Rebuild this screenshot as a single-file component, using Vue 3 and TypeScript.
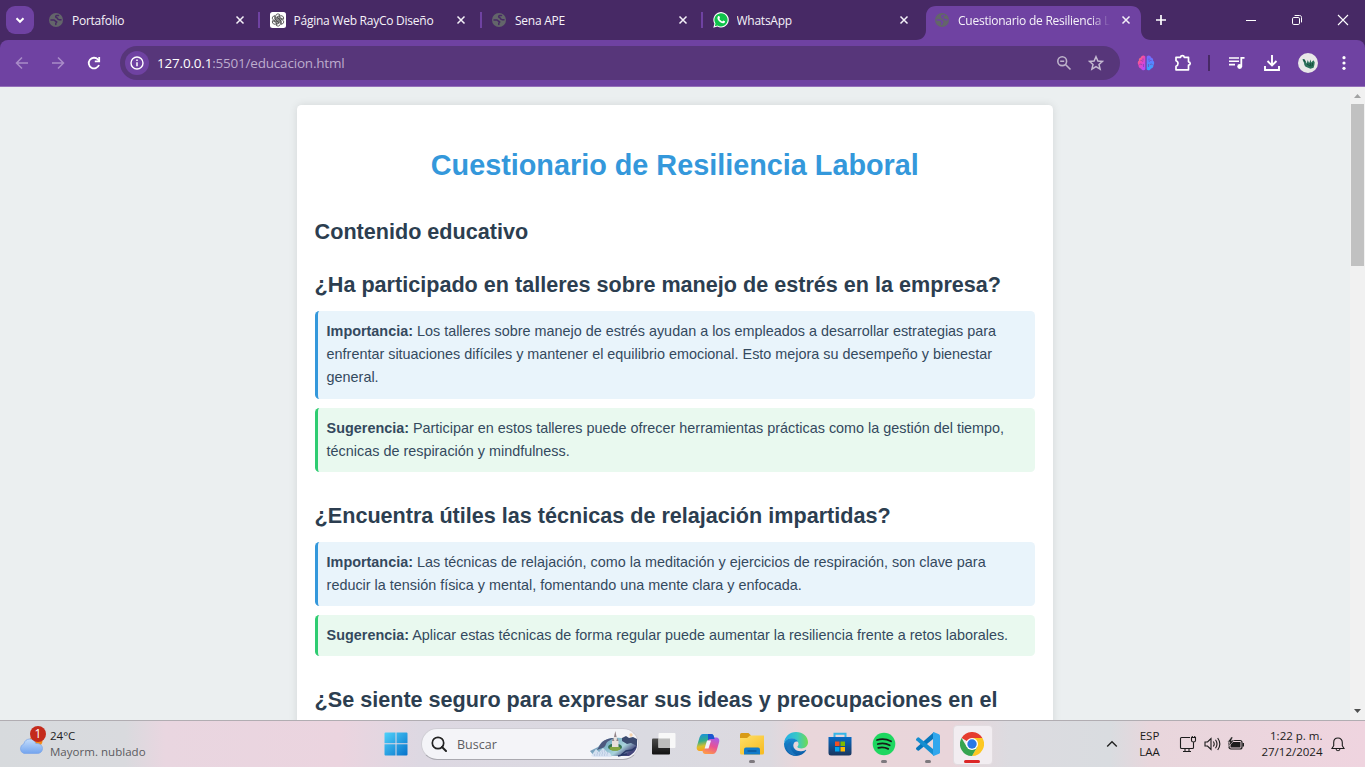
<script setup lang="ts">
interface Tab {
  title: string
  icon: 'globe' | 'gpt' | 'whatsapp'
  active?: boolean
}
interface Note {
  kind: 'importance' | 'suggestion'
  label: string
  text: string
}
interface Topic {
  question: string
  notes: Note[]
}

const tabs: Tab[] = [
  { title: 'Portafolio', icon: 'globe' },
  { title: 'Página Web RayCo Diseño', icon: 'gpt' },
  { title: 'Sena APE', icon: 'globe' },
  { title: 'WhatsApp', icon: 'whatsapp' },
  { title: 'Cuestionario de Resiliencia Laboral', icon: 'globe', active: true },
]

const topics: Topic[] = [
  {
    question: '¿Ha participado en talleres sobre manejo de estrés en la empresa?',
    notes: [
      {
        kind: 'importance',
        label: 'Importancia:',
        text: 'Los talleres sobre manejo de estrés ayudan a los empleados a desarrollar estrategias para enfrentar situaciones difíciles y mantener el equilibrio emocional. Esto mejora su desempeño y bienestar general.',
      },
      {
        kind: 'suggestion',
        label: 'Sugerencia:',
        text: 'Participar en estos talleres puede ofrecer herramientas prácticas como la gestión del tiempo, técnicas de respiración y mindfulness.',
      },
    ],
  },
  {
    question: '¿Encuentra útiles las técnicas de relajación impartidas?',
    notes: [
      {
        kind: 'importance',
        label: 'Importancia:',
        text: 'Las técnicas de relajación, como la meditación y ejercicios de respiración, son clave para reducir la tensión física y mental, fomentando una mente clara y enfocada.',
      },
      {
        kind: 'suggestion',
        label: 'Sugerencia:',
        text: 'Aplicar estas técnicas de forma regular puede aumentar la resiliencia frente a retos laborales.',
      },
    ],
  },
  { question: '¿Se siente seguro para expresar sus ideas y preocupaciones en el', notes: [] },
]

const petals = [0, 60, 120, 180, 240, 300]
</script>

<template>
  <div class="screen">
    <header class="titlebar">
      <button class="tab-search">
        <svg width="28" height="28" viewBox="0 0 28 28"><path d="M10.500 12.300l3.500 3.500 3.500-3.500" fill="none" stroke="#fff" stroke-width="2" /></svg>
      </button>
      <div class="tabs">
        <div v-for="(tab, i) in tabs" :key="tab.title" class="tab" :class="{ active: tab.active, last: i === 3 }">
          <svg v-if="tab.active" class="tab-shape" width="235" height="34" viewBox="0 0 235 34">
            <path d="M0 34c6 0 10-4 10-10V10C10 4 14 0 20 0h195c6 0 10 4 10 10v14c0 6 4 10 10 10z" fill="#6f42a2" />
          </svg>
          <span class="favicon">
            <svg v-if="tab.icon === 'globe'" width="14" height="14" viewBox="0 0 14 14">
              <circle cx="7" cy="7" r="7" fill="#63656a" />
              <g fill="none" :stroke="tab.active ? '#6f42a2' : '#472965'" stroke-linecap="round" stroke-linejoin="round">
                <path d="M2 7h2.800c1.300 0 1.100 1.300 2.400 1.500 1 .2.300 1.300-.4 1.600v1.400" stroke-width="1.500" />
                <path d="M9.500 2.400H7.800c-1.300.3-1.600 1.700-.4 2.100 1.300.3 1.100 1.800 2.300 2 .9.100 1.400.5 2.300.3" stroke-width="1.500" />
              </g>
            </svg>
            <svg v-else-if="tab.icon === 'gpt'" width="16" height="16" viewBox="0 0 16 16">
              <rect width="16" height="16" rx="2.500" fill="#fff" />
              <g fill="none" stroke="#333" stroke-width="0.750">
                <path v-for="a in petals" :key="a" :transform="`rotate(${a} 8 8)`" d="M5.700 8.200V4.200c0-1.400 1-2.300 2.200-2.300 1 0 1.700.4 2.200 1.200L6.900 5v3.700" />
              </g>
            </svg>
            <svg v-else width="16" height="16" viewBox="0 0 16 16">
              <path d="M.3 15.700l1.100-4A7.700 7.700 0 1 1 4.400 14.600z" fill="#fff" />
              <path d="M1.800 14.200l.7-2.700A6.600 6.600 0 1 1 4.600 13.500z" fill="#10c24b" />
              <path d="M5.300 4.100c.5-.3.9-.2 1.100.2l.6 1.400c.1.400-.6.900-.6 1.100.6 1.300 1.600 2.100 2.900 2.600.3 0 .8-1 1.100-.9l1.500.8c.4.3-.1 1.400-.7 1.800-1 .6-2.500.1-3.900-.8C5.600 9.100 4.500 7.700 4.400 6.300c0-.9.3-1.700.9-2.200z" fill="#fff" />
            </svg>
          </span>
          <span class="tab-title">{{ tab.title }}</span>
          <svg class="close" width="10" height="10" viewBox="0 0 10 10"><path d="M1.500 1.500l7 7M8.500 1.500l-7 7" stroke="#f4f1f8" stroke-width="1.500" /></svg>
        </div>
      </div>
      <svg class="plus" width="12" height="12" viewBox="0 0 12 12"><path d="M6 1v10M1 6h10" stroke="#fff" stroke-width="1.700" /></svg>
      <div class="window-controls">
        <svg width="12" height="12" viewBox="0 0 12 12"><path d="M1 6.500h10" stroke="#fff" /></svg>
        <svg width="12" height="12" viewBox="0 0 12 12" fill="none" stroke="#fff"><rect x="1.500" y="3.500" width="7" height="7" rx="1.300" /><path d="M3.600 1.500h4.900c1.300 0 2 .7 2 2v4.900" /></svg>
        <svg width="12" height="12" viewBox="0 0 12 12"><path d="M1 1l10 10M11 1L1 11" stroke="#fff" stroke-width="1.100" /></svg>
      </div>
    </header>

    <nav class="toolbar">
      <svg class="nav-icon dim" viewBox="0 0 16 16"><path d="M14 8H3M8 2.500L2.500 8 8 13.500" /></svg>
      <svg class="nav-icon dim" viewBox="0 0 16 16"><path d="M2 8h11M8 2.500L13.500 8 8 13.500" /></svg>
      <svg class="nav-icon" viewBox="0 0 16 16"><path d="M13 10a5.300 5.300 0 1 1-1.100-5.600L13 5.500" /><path d="M13.200 2v4.400H8.800" /></svg>
      <div class="address">
        <span class="info">
          <svg width="14" height="14" viewBox="0 0 14 14"><circle cx="7" cy="7" r="6" fill="none" stroke="#fff" stroke-width="1.400" /><path d="M7 6.200v4M7 3.500v1.400" stroke="#fff" stroke-width="1.500" /></svg>
        </span>
        <span class="url"><b>127.0.0.1</b>:5501/educacion.html</span>
        <svg class="address-icon" width="16" height="16" viewBox="0 0 16 16" fill="none" stroke="#bdb2ca" stroke-width="1.600"><circle cx="6.200" cy="6.200" r="4.400" /><path d="M9.500 9.500l5 5M4.200 6.200h4" /></svg>
        <svg class="address-icon star" width="16" height="16" viewBox="0 0 16 16" fill="none" stroke="#c5bad1" stroke-width="1.500"><path d="M8 1.700l1.900 4.300 4.600.4-3.500 3.100 1.100 4.600L8 11.700l-4.100 2.400L5 9.500 1.500 6.400l4.600-.4z" /></svg>
      </div>
      <div class="tools">
        <svg class="brain" width="18" height="18" viewBox="0 0 18 18">
          <defs>
            <linearGradient id="brainL" x2=".8" y2="1"><stop stop-color="#ff9a3c" /><stop offset=".45" stop-color="#ee45b5" /><stop offset="1" stop-color="#b04cff" /></linearGradient>
            <linearGradient id="brainR" y2="1" x2="0"><stop stop-color="#7c62ff" /><stop offset="1" stop-color="#32a9ff" /></linearGradient>
          </defs>
          <path d="M8.300 2.500c-1.500-1.800-3.900-1-4.300.9C2 3.700 1.500 5.700 2 6.600.3 7.700.6 10 1.500 11c-.1 2.200 1.200 3.300 2.500 3.500.7 2 3.500 2.300 4.300.8z" fill="url(#brainL)" />
          <path d="M9.700 2.500c1.500-1.800 3.900-1 4.300.9 2 .3 2.500 2.300 2 3.200 1.700 1.100 1.400 3.400.5 4.400.1 2.200-1.200 3.300-2.500 3.500-.7 2-3.500 2.300-4.300.8z" fill="url(#brainR)" />
          <path d="M3.500 6.500c1.200-.2 2 .2 2.300 1.200M2.500 10.500c1-.7 2.300-.4 2.700.6M6 4.500v2M6.500 10v3M14.500 6.500c-1.200-.2-2 .2-2.300 1.200M15.500 10.500c-1-.7-2.300-.4-2.700.6M12 4.500v2M11.500 10v3" fill="none" stroke="#6f42a2" stroke-width=".6" />
        </svg>
        <svg class="puzzle" width="20" height="20" viewBox="0 0 20 20"><path d="M3 4.300h4.500q.2-1.700 1.900-1.700t1.900 1.700h4.200v4.500q1.700.2 1.700 1.700t-1.700 1.700v4.600H3v-3.600q2-.5 2-2.700T3 7.800z" fill="none" stroke="#fff" stroke-width="1.700" stroke-linejoin="round" /></svg>
        <span class="tool-divider"></span>
        <svg class="media" width="18" height="18" viewBox="0 0 18 18"><path d="M1 4h10M1 7.300h10M1 10.600h6" stroke="#fff" stroke-width="1.600" /><path d="M13.300 12.500V3.800h3.200" fill="none" stroke="#fff" stroke-width="1.800" /><circle cx="11.700" cy="12.500" r="2.400" fill="#fff" /></svg>
        <svg class="download" width="18" height="18" viewBox="0 0 18 18" fill="none" stroke="#fff" stroke-width="1.900"><path d="M9 1v10M4.500 7L9 11.500 13.500 7M2 12v4h14v-4" /></svg>
        <svg class="avatar" width="20" height="20" viewBox="0 0 20 20"><circle cx="10" cy="10" r="10" fill="#e8e8e8" /><path d="M4.500 6.300c1.500-.8 2.700-.2 3 1.700l1.200 2.500 1-3.500 1.400 3 1.700-3.500.4 3 2.200-2.200 1.300 2-.3 2.500-.8 3-3.200 1-3.500-1.500c-1.800-.6-2.800-2-2.900-4.600l-.9-1.700z" fill="#2c715b" /><path d="M9 11l3 2M12 10l1 3.500M14.500 10l-.3 3M6 7l1.200 2" stroke="#164c3c" /></svg>
        <svg class="menu" width="4" height="16" viewBox="0 0 4 16" fill="#fff"><circle cx="2" cy="2.700" r="1.600" /><circle cx="2" cy="8" r="1.600" /><circle cx="2" cy="13.300" r="1.600" /></svg>
      </div>
    </nav>

    <div class="viewport">
      <main class="page">
        <article class="card">
          <h1>Cuestionario de Resiliencia Laboral</h1>
          <h2>Contenido educativo</h2>
          <section v-for="topic in topics" :key="topic.question" class="topic">
            <h3>{{ topic.question }}</h3>
            <p v-for="note in topic.notes" :key="note.text" class="note" :class="note.kind">
              <strong>{{ note.label }}</strong> {{ note.text }}
            </p>
          </section>
        </article>
      </main>
      <aside class="scrollbar">
        <svg width="15" height="17" viewBox="0 0 15 17"><path d="M4 11l3.500-4 3.500 4z" fill="#a3a3a3" /></svg>
        <span class="thumb"></span>
        <svg class="down" width="15" height="17" viewBox="0 0 15 17"><path d="M4 6h7l-3.500 4z" fill="#505050" /></svg>
      </aside>
    </div>

    <footer class="taskbar">
      <div class="weather">
        <svg width="32" height="34" viewBox="0 0 32 34">
          <defs><linearGradient id="cloud" x2="0" y2="1"><stop stop-color="#c4ddfb" /><stop offset="1" stop-color="#73a4ee" /></linearGradient></defs>
          <circle cx="18" cy="17" r="6.500" fill="#f58a18" />
          <path d="M6 29.500a5 5 0 0 1-.2-9.500c.8-3.300 3-5 6-5 3.200 0 5.200 1.700 6 4.500 3.500-.3 6.700 1.600 6.700 4.900 0 3-2.300 5.100-5.300 5.100z" fill="url(#cloud)" stroke="#7ba5e8" stroke-width=".7" />
          <circle cx="20" cy="10" r="8" fill="#c42b1c" />
          <text x="20" y="14.200" text-anchor="middle" font-size="12" fill="#fff">1</text>
        </svg>
        <div class="weather-text"><span>24°C</span><span class="sub">Mayorm. nublado</span></div>
      </div>

      <div class="apps">
        <div class="app start">
          <svg width="24" height="24" viewBox="0 0 24 24">
            <defs><linearGradient id="win" x2="1" y2="1"><stop stop-color="#4fd2fa" /><stop offset="1" stop-color="#0672cb" /></linearGradient></defs>
            <path d="M1.500.5h10v10.800H.5V1.500q0-1 1-1zM12.500.5h10q1 0 1 1v9.800h-11zM.5 12.300h11v11.200h-10q-1 0-1-1zM12.500 12.300h11v10.200q0 1-1 1h-10z" fill="url(#win)" />
          </svg>
        </div>
        <div class="search">
          <svg class="lens" width="16" height="16" viewBox="0 0 16 16" fill="none" stroke="#222" stroke-width="1.700"><circle cx="7" cy="7" r="5.700" /><path d="M11 11l4 4" stroke-width="2" stroke-linecap="round" /></svg>
          <span>Buscar</span>
          <svg class="scene" width="49" height="28" viewBox="0 0 49 28">
            <defs><linearGradient id="lake" x2="1" y2=".5"><stop stop-color="#6d6ba0" /><stop offset=".45" stop-color="#7fb4c8" /><stop offset=".75" stop-color="#a9d3dc" /><stop offset="1" stop-color="#45467c" /></linearGradient></defs>
            <path d="M1 21l8-4 4-5c5-4 12-5 19-4 6 0 12 1 16 2v6c-1 5-4 8-8 10H5z" fill="url(#lake)" />
            <path d="M11 15c3-5 8-7 14-7-3 2-7 3-8 6-1 4-4 4-9 6z" fill="#4d597f" />
            <path d="M33 8l4-2 3 2 4-1 4 2v7l-6-3-4 1-5-3z" fill="#3c4b70" />
            <path d="M2 26l5-7 3 3 4-4 4 4 3 1 2 4H5z" fill="#dce4f4" opacity=".9" />
            <path d="M8 23h12M5 25h14M10 21h6" stroke="#9ba9cf" stroke-width=".8" stroke-dasharray="1 1.500" />
            <ellipse cx="26" cy="17" rx="7" ry="3.600" fill="#347355" /><ellipse cx="26" cy="18.500" rx="5.500" ry="2.300" fill="#83a640" />
            <path d="M23 17v-6l1.500-2 1-3 .8-5 .7 5 1 3 1.500 2v6z" fill="#e9e0dc" /><path d="M26.300 1l-1.300 6h2.600zM23 11l1-3 1.500 3zM27.300 11l1-3 1.200 3z" fill="#93858a" />
            <path d="M32 25l5-4 6-1 4-3M29 26l9-2" stroke="#283967" stroke-width="1.400" fill="none" /><circle cx="42" cy="5" r="1.700" fill="#f5d2ac" />
          </svg>
        </div>
        <div class="app">
          <svg width="24" height="24" viewBox="0 0 24 24">
            <defs><linearGradient id="tv" x2="0" y2="1"><stop stop-color="#4b4b4b" /><stop offset="1" stop-color="#111" /></linearGradient></defs>
            <rect y="6.500" width="18" height="16" rx="1" fill="url(#tv)" /><rect x="6.500" y="1" width="17" height="15" rx="1" fill="#f8f8f8" /><path d="M6.500 6.500H18V16H6.500z" fill="#bdbdbd" />
          </svg>
        </div>
        <div class="app">
          <svg width="24" height="24" viewBox="0 0 24 24">
            <defs>
              <linearGradient id="copA" x2=".2" y2="1"><stop stop-color="#168fe5" /><stop offset=".45" stop-color="#33ad8c" /><stop offset=".75" stop-color="#d9c02d" /><stop offset="1" stop-color="#fba01e" /></linearGradient>
              <linearGradient id="copB" x1=".7" x2=".3" y2="1"><stop stop-color="#a75ee8" /><stop offset=".5" stop-color="#e95294" /><stop offset="1" stop-color="#ff9a46" /></linearGradient>
            </defs>
            <path d="M7 2h8c2 0 2.500 1 3 3l.6 2h-4c-2 0-2.600 1.500-3 3l-2 6c-.5 2-1.500 3-3.500 3H4c-2.500 0-4-2-3-5l2.500-8.500C4.500 3 5.500 2 7 2z" fill="url(#copA)" />
            <path d="M17 22H9.500c-2 0-2.500-1-3-3l-.3-1c2 0 3-1 3.500-3l2-6c.6-2 1.500-3.500 3.500-3.500H20c2.500 0 4 2 3 5L20.500 19c-1 2-2 3-3.500 3z" fill="url(#copB)" />
            <path d="M12 2h3c2 0 2.500 1 3 3l.6 2h-4c-1.500 0-2 .5-2.600 1.500z" fill="#1c55d0" /><path d="M11 8.500h4l-2.500 8H8.600z" fill="#f4f2fb" />
          </svg>
        </div>
        <div class="app running">
          <svg width="24" height="24" viewBox="0 0 24 24">
            <defs><linearGradient id="fold" x2=".8" y2="1"><stop stop-color="#ffdf67" /><stop offset="1" stop-color="#f7bd25" /></linearGradient></defs>
            <path d="M0 2.500Q0 1 1.500 1h7L11 3.500V8H0z" fill="#d89b16" /><path d="M0 6h7l3-2.500h14V21q0 1.500-1.500 1.500h-21Q0 22.500 0 21z" fill="url(#fold)" /><path d="M4 22.500v-5q0-2 2-2h12q2 0 2 2v5z" fill="#117bc9" /><path d="M7.500 19h9" stroke="#0b5697" stroke-width="1.400" />
          </svg>
        </div>
        <div class="app">
          <svg width="24" height="24" viewBox="0 0 24 24">
            <defs>
              <linearGradient id="edgeA" x1="0" x2="1"><stop stop-color="#22aee8" /><stop offset=".55" stop-color="#39c8c5" /><stop offset="1" stop-color="#70db50" /></linearGradient>
              <linearGradient id="edgeB" x2="0" y2="1"><stop stop-color="#168dd3" /><stop offset="1" stop-color="#0c59a4" /></linearGradient>
            </defs>
            <path d="M0 11C.7 4.500 5.600 0 12 0c7 0 12 4.700 12 10.300 0 3.700-2.900 6.200-6.500 6.200-2.700 0-4.400-1-4.100-2 1.100-1 1.400-2.400.8-4C13.200 7.700 10.600 6.500 7.500 6.500 4.200 6.500 1.300 8.300 0 11z" fill="url(#edgeA)" />
            <path d="M0 11.500C1.100 8 4.300 6.300 7.700 6.300c2.900 0 5.300 1.200 6.400 3.600-2.300-1.200-4.800.5-4.800 3.700 0 4.100 5.700 7.800 12.200 4.300.5-.3.900.2.600.7C20 22 16.200 24 12 24 5 24-.2 18.200 0 11.500z" fill="url(#edgeB)" />
            <path d="M7.800 9c-3.700 4 .2 13.600 6.700 14.500-3.500.8-7.700-.5-10-3.500-3-4-1-9 3.300-11z" fill="#1b75bd" />
          </svg>
        </div>
        <div class="app">
          <svg width="24" height="24" viewBox="0 0 24 24">
            <defs><linearGradient id="store" x2="0" y2="1"><stop stop-color="#076ac4" /><stop offset="1" stop-color="#1c365d" /></linearGradient></defs>
            <path d="M6.500 6V1.700h11V6" fill="none" stroke="#36b6e8" stroke-width="2" /><path d="M.5 5h23v16q0 2.500-2.500 2.500H3Q.5 23.500.5 21z" fill="url(#store)" /><path d="M7 9.500h4.500V14H7z" fill="#f25022" /><path d="M12.500 9.500H17V14h-4.500z" fill="#7fba00" /><path d="M7 15h4.500v4.500H7z" fill="#00a4ef" /><path d="M12.500 15H17v4.500h-4.500z" fill="#ffb900" />
          </svg>
        </div>
        <div class="app running">
          <svg width="24" height="24" viewBox="0 0 24 24"><circle cx="12" cy="12" r="11.300" fill="#1ed760" /><path d="M5 8c5-1.400 9.700-.9 14 1.300M5.800 12c4.200-1.100 8.400-.7 11.900 1.200M6.300 15.800c3.500-.8 6.800-.5 9.900 1.100" fill="none" stroke="#171b19" stroke-width="1.800" stroke-linecap="round" /></svg>
        </div>
        <div class="app running">
          <svg width="24" height="24" viewBox="0 0 24 24"><path d="M18 0l-1 7L3 18.500q-.8.500-1.400 0L.3 17.200q-.6-.7 0-1.400z" fill="#0877bc" /><path d="M18 24l-1-7L3 5.500q-.8-.5-1.400 0L.3 6.800q-.6.700 0 1.400z" fill="#168ed0" /><path d="M17.500 0l5.500 2.300q1 .5 1 1.500v16.400q0 1-1 1.500L17.500 24q-.5-.3-.5-1V1q0-.7.500-1z" fill="#31a7ed" /></svg>
        </div>
        <div class="app running current">
          <svg width="24" height="24" viewBox="0 0 24 24"><path d="M12 12L1.600 6A12 12 0 0 1 22.400 6z" fill="#e53c2f" /><path d="M12 6h10.400A12 12 0 0 1 12 24l5.200-9z" fill="#fcc722" /><path d="M17.200 15L12 24A12 12 0 0 1 1.600 6l5.200 9z" fill="#35a450" /><circle cx="12" cy="12" r="6" fill="#fff" /><circle cx="12" cy="12" r="4.700" fill="#2878e5" /></svg>
        </div>
      </div>

      <div class="tray">
        <svg class="chevron" width="12" height="8" viewBox="0 0 12 8"><path d="M1.200 6.500L6 1.800l4.800 4.700" fill="none" stroke="#222" stroke-width="1.400" /></svg>
        <div class="language"><span>ESP</span><span>LAA</span></div>
        <svg class="network" width="18" height="18" viewBox="0 0 18 18" fill="none" stroke="#1c1c1c" stroke-width="1.100"><path d="M11 2.500H2.500q-1 0-1 1v9q0 1 1 1h11q1 0 1-1V9M6 13.500v3M10 13.500v3M4 16.500h8M12.500 2.500h4v3q0 1.500-2 1.500t-2-1.500zM13.300 2.500V1M15.700 2.500V1M14.500 7v3" /></svg>
        <svg class="sound" width="17" height="16" viewBox="0 0 17 16" fill="none" stroke="#1c1c1c" stroke-width="1.100"><path d="M1 6h2.500L7 2.500v11L3.500 10H1zM9.300 5.500q1.800 2.500 0 5M11.500 3.700q3 4.300 0 8.600M13.700 2q4.300 6 0 12" /></svg>
        <svg class="battery" width="18" height="14" viewBox="0 0 18 14"><rect x="2" y="3.500" width="13" height="8.500" rx="2" fill="none" stroke="#1c1c1c" stroke-width="1.200" /><rect x="3.500" y="5" width="10" height="5.500" fill="#1c1c1c" /><path d="M15.500 6h1.500v3.500h-1.500z" fill="#1c1c1c" /><path d="M4.500-.3L.5 5h2.300L1.500 9.500 7 3.800H4.300L6 0z" fill="#1c1c1c" stroke="#ead7df" stroke-width=".6" /></svg>
        <div class="clock"><span class="time">1:22 p. m.</span><span class="date">27/12/2024</span></div>
        <svg class="bell" width="14" height="15" viewBox="0 0 14 15" fill="none" stroke="#1c1c1c" stroke-width="1.100"><path d="M7 1C4.300 1 2.700 3 2.700 5.500v3.200L1 11.500h12l-1.700-2.800V5.500C11.300 3 9.700 1 7 1zM5 11.700q.2 2 2 2t2-2" /></svg>
      </div>
    </footer>
  </div>
</template>

<style>
body { margin: 0; overflow: hidden; }
</style>

<style scoped>
* { box-sizing: border-box; }
svg { display: block; flex: none; }
.screen { width: 1365px; height: 767px; display: flex; flex-direction: column; overflow: hidden; background: #472965; font-family: "Open Sans", "Noto Sans", sans-serif; }

.titlebar { height: 40px; flex: none; display: flex; align-items: center; background: #472965; }
.tab-search { width: 28px; height: 28px; margin: 0 4px 0 6px; padding: 0; border: 0; border-radius: 9px; background: #6f42a2; flex: none; }
.tabs { display: grid; grid-template-columns: repeat(5, 221.5px); height: 40px; flex: none; width: 1107.5px; }
.tab { display: flex; align-items: center; position: relative; padding-left: 10px; }
.tab::after { content: ""; width: 2px; height: 16px; background: #6f42a2; margin-left: 13.500px; flex: none; }
.tab.last::after, .tab.active::after { visibility: hidden; }
.tab-shape { position: absolute; left: -8px; top: 6px; }
.favicon { width: 16px; height: 16px; display: flex; align-items: center; justify-content: center; position: relative; flex: none; }
.tab-title { width: 152px; margin: 1px 10.500px 0 8px; white-space: nowrap; overflow: hidden; color: #f6f3f9; font-size: 12px; line-height: 20px; letter-spacing: -0.25px; position: relative; flex: none; }
.active .tab-title { mask-image: linear-gradient(90deg, #000 132px, transparent 152px); }
.close { position: relative; }
.plus { margin-left: 9.500px; }
.window-controls { display: flex; gap: 34px; margin-left: auto; margin-right: 16px; }

.toolbar { height: 47px; flex: none; display: flex; align-items: center; background: #6f42a2; border-bottom: 1px solid #9470b9; border-radius: 8px 8px 0 0; padding-left: 14px; }
.nav-icon { width: 16px; height: 16px; margin-right: 20px; fill: none; stroke: #fff; stroke-width: 1.800; }
.nav-icon.dim { stroke: #a98cc8; stroke-width: 1.500; }
.address { width: 1000px; height: 34px; margin-left: -2px; border-radius: 17px; background: #57367a; display: flex; align-items: center; flex: none; }
.info { width: 24px; height: 24px; border-radius: 50%; background: #6f42a2; margin-left: 5px; display: grid; place-items: center; }
.url { margin-left: 8px; font-size: 13.500px; color: #bdaccd; letter-spacing: -0.2px; white-space: nowrap; }
.url b { color: #fff; font-weight: 400; }
.address-icon { margin-left: auto; }
.address-icon.star { margin: 0 16px; }
.tools { display: flex; align-items: center; margin-left: 17px; }
.puzzle { margin-left: 18px; }
.tool-divider { width: 2px; height: 16px; background: #472965; margin-left: 15px; }
.media { margin-left: 18px; }
.download { margin-left: 17px; }
.avatar { margin-left: 17px; }
.menu { margin-left: 24px; }

.viewport { height: 633px; flex: none; display: flex; background: #ebeff0; overflow: hidden; }
.page { width: 1350px; flex: none; padding-top: 18px; font-family: "Liberation Sans", Arial, sans-serif; color: #34495e; line-height: 1.6; font-size: 14.400px; }
.card { width: 756px; height: 900px; margin: 0 auto; padding: 18px 18px 18px 17.600px; border-radius: 4.500px; background: #fff; box-shadow: 0 0 9px rgba(0, 0, 0, .1); display: flow-root; }
h1 { margin: 19.300px 0 27px; text-align: center; font-size: 28.800px; color: #3498db; white-space: nowrap; }
h2 { margin: 0 0 18px; font-size: 21.600px; color: #2c3e50; }
h3 { margin: 0 0 9px; font-size: 21.600px; color: #2c3e50; white-space: nowrap; }
.topic { margin-bottom: 27px; }
.note { margin: 0 0 9px; padding: 9px; border-left: 3px solid; border-radius: 4.500px; }
.topic:first-of-type .importance { line-height: 22.850px; padding-bottom: 9.600px; }
.importance { background: #e9f4fb; border-color: #3498db; }
.suggestion { background: #e9f9ef; border-color: #2ecc71; }
.scrollbar { width: 15px; height: 633px; background: #f1f1f1; display: flex; flex-direction: column; align-items: center; }
.thumb { width: 13px; height: 162px; background: #c1c1c1; }
.down { margin-top: auto; }

.taskbar { height: 47px; flex: none; border-top: 1px solid #b1adb2; display: flex; background: linear-gradient(90deg, #d7dadd 0, #d9dade 125px, #e9d6e0 165px, #ebd4df 340px, #ddd8e2 420px, #dadae1 650px, #dcd9df 770px, #e9d6da 800px, #e9d5da 950px, #dcdbe0 1010px, #d9dce0 1110px, #e8d6dc 1150px, #efd4df 1365px); }
.weather { width: 373px; padding-left: 18px; display: flex; align-items: flex-start; flex: none; font-size: 11.500px; }
.weather svg { margin-top: 3px; font-family: "Open Sans", sans-serif; }
.weather-text { display: flex; flex-direction: column; margin-top: 7px; line-height: 16px; color: #1d1d1d; }
.weather-text .sub { color: #5b5b60; letter-spacing: .03px; }
.apps { display: flex; align-items: center; flex: none; }
.app { width: 44px; height: 46px; display: grid; place-items: center; position: relative; flex: none; }
.app.start { padding-left: 1px; }
.app svg { position: relative; }
.app.running::after { content: ""; position: absolute; left: 19px; bottom: 4px; width: 6px; height: 3px; border-radius: 2px; background: #7d797e; }
.app.current::before { content: ""; position: absolute; left: 3px; top: 4px; width: 38px; height: 38px; border: 1px solid #e2dce0; border-radius: 4px; background: #f2edf1; }
.app.current::after { left: 14px; width: 16px; background: #dc2626; }
.search { width: 218px; height: 32px; margin: 0 3px 0 3.500px; border: 1px solid #d0ced5; border-bottom-color: #aaa9b0; border-radius: 16px; background: #f4f4f8; display: flex; align-items: center; overflow: hidden; flex: none; font-size: 12.500px; color: #5d5c61; }
.lens { margin: 0 10px 0 9.500px; }
.scene { margin-left: auto; }
.tray { flex: 1; display: flex; align-items: center; font-size: 11.500px; line-height: 16px; color: #1b1b1b; }
.chevron { margin-left: 112px; }
.language { display: flex; flex-direction: column; align-items: center; width: 30px; margin-left: 17px; }
.network { margin-left: 14px; }
.sound { margin-left: 7px; }
.battery { margin-left: 6px; }
.clock { display: flex; flex-direction: column; align-items: flex-end; width: 74px; margin-left: 4px; white-space: nowrap; }
.bell { margin-left: 8px; }
</style>
